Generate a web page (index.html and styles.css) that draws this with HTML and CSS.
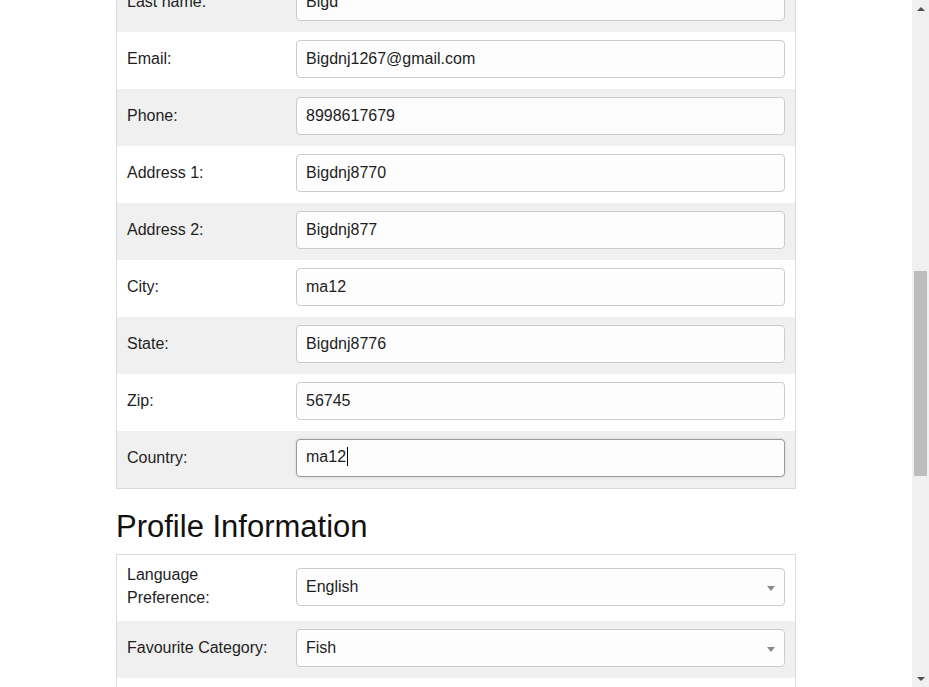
FILE: index.html
```html
<!DOCTYPE html>
<html lang="en">
<head>
<meta charset="utf-8">
<title>Account</title>
<link rel="stylesheet" href="styles.css">
</head>
<body>
<div class="viewport">
  <main class="main">
    <div class="content">
      <div class="form-box form-box-first">
        <div class="row alt"><div class="label">Last name:</div><div class="field">Bigd</div></div>
        <div class="row"><div class="label">Email:</div><div class="field">Bigdnj1267@gmail.com</div></div>
        <div class="row alt"><div class="label">Phone:</div><div class="field">8998617679</div></div>
        <div class="row"><div class="label">Address 1:</div><div class="field">Bigdnj8770</div></div>
        <div class="row alt"><div class="label">Address 2:</div><div class="field">Bigdnj877</div></div>
        <div class="row"><div class="label">City:</div><div class="field">ma12</div></div>
        <div class="row alt"><div class="label">State:</div><div class="field">Bigdnj8776</div></div>
        <div class="row"><div class="label">Zip:</div><div class="field">56745</div></div>
        <div class="row alt"><div class="label">Country:</div><div class="field focused">ma12<span class="caret"></span></div></div>
      </div>

      <h2 class="section-title">Profile Information</h2>

      <div class="form-box">
        <div class="row row-tall"><div class="label">Language Preference:</div><div class="field select">English<span class="arrow"></span></div></div>
        <div class="row alt"><div class="label">Favourite Category:</div><div class="field select">Fish<span class="arrow"></span></div></div>
        <div class="row"><div class="label">Enable MyList:</div><div class="check-cell"><span class="checkbox"></span></div></div>
        <div class="row alt"><div class="label">Enable MyBanner:</div><div class="check-cell"><span class="checkbox"></span></div></div>
      </div>
    </div>
  </main>
  <div class="scrollbar">
    <div class="sb-btn"><span class="sb-up"></span></div>
    <div class="sb-track"><div class="sb-thumb"></div></div>
    <div class="sb-btn"><span class="sb-down"></span></div>
  </div>
</div>
</body>
</html>
```

FILE: styles.css
```css
html, body {
  margin: 0;
  padding: 0;
  background: #ffffff;
}

body {
  font-family: "Liberation Sans", Arial, sans-serif;
  font-size: 16px;
  color: #1e1e1e;
}

.viewport {
  display: flex;
  height: 687px;
  overflow: hidden;
}

.main {
  flex: 1;
  overflow: hidden;
}

.content {
  width: 680px;
  margin-left: 116px;
}

.form-box {
  border: 1px solid #dadada;
}

.form-box-first {
  margin-top: -26px;
}

.row {
  display: flex;
  align-items: center;
  padding: 8px 10px 11px 10px;
  background: #ffffff;
}

.row.alt {
  background: #f0f0f0;
}

.row-tall {
  padding-top: 9px;
  padding-bottom: 11px;
}

.label {
  width: 150px;
  flex: none;
  margin-right: 19px;
  line-height: 23px;
  padding-bottom: 1px;
  margin-top: -1px;
}

.field {
  flex: 1;
  height: 36px;
  border: 1px solid #cccccc;
  border-radius: 4px;
  background: #fdfdfd;
  padding: 0 9px;
  display: flex;
  align-items: center;
  line-height: 20px;
  position: relative;
}

.field.focused {
  border-color: #9a9a9a;
  box-shadow: 0 0 3px rgba(0, 0, 0, 0.12);
  align-items: flex-start;
  padding-top: 7px;
  height: 29px;
}

.caret {
  display: inline-block;
  width: 1px;
  height: 19px;
  background: #000000;
  margin-left: 1px;
}

.arrow {
  position: absolute;
  right: 9px;
  top: 17px;
  width: 0;
  height: 0;
  border-left: 4px solid transparent;
  border-right: 4px solid transparent;
  border-top: 5px solid #888888;
}

.check-cell {
  flex: 1;
  height: 38px;
  display: flex;
  align-items: center;
}

.checkbox {
  width: 13px;
  height: 13px;
  border: 1px solid #767676;
  border-radius: 2px;
  background: #ffffff;
}

.section-title {
  font-size: 31px;
  font-weight: normal;
  line-height: 33px;
  margin: 21px 0 11px 0;
  color: #111111;
}

.scrollbar {
  width: 17px;
  flex: none;
  background: #f0f0f0;
  display: flex;
  flex-direction: column;
}

.sb-btn {
  height: 17px;
  display: flex;
  align-items: center;
  justify-content: center;
  flex: none;
}

.sb-up {
  width: 0;
  height: 0;
  border-left: 4px solid transparent;
  border-right: 4px solid transparent;
  border-bottom: 4px solid #505050;
}

.sb-down {
  width: 0;
  height: 0;
  border-left: 4px solid transparent;
  border-right: 4px solid transparent;
  border-top: 4px solid #505050;
}

.sb-track {
  flex: 1;
}

.sb-thumb {
  margin: 254px 2px 0 2px;
  height: 205px;
  background: #bdbdbd;
}
```
